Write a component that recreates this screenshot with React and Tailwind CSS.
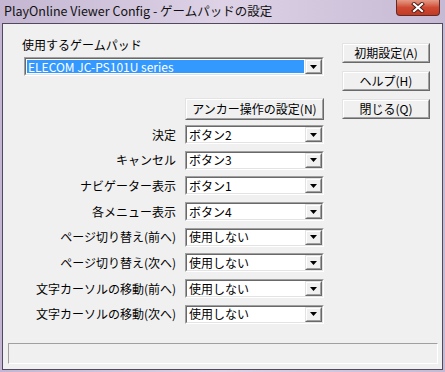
import React from 'react'

const rows = [
  ['決定', 'ボタン2'],
  ['キャンセル', 'ボタン3'],
  ['ナビゲーター表示', 'ボタン1'],
  ['各メニュー表示', 'ボタン4'],
  ['ページ切り替え(前へ)', '使用しない'],
  ['ページ切り替え(次へ)', '使用しない'],
  ['文字カーソルの移動(前へ)', '使用しない'],
  ['文字カーソルの移動(次へ)', '使用しない'],
]

function DropButton() {
  return (
    <div className="flex w-[17px] border border-t-[#e3e3e3] border-l-[#e3e3e3] border-b-[#696969] border-r-[#696969]">
      <div className="flex flex-1 items-center justify-center border border-t-white border-l-white border-b-[#a0a0a0] border-r-[#a0a0a0] bg-[#f0f0f0]">
        <svg width="7" height="4" viewBox="0 0 7 4">
          <polygon points="0,0 7,0 3.5,4" fill="#000" />
        </svg>
      </div>
    </div>
  )
}

function Combo({ value, selected, className }) {
  return (
    <div className={`flex border border-t-[#a0a0a0] border-l-[#a0a0a0] border-b-white border-r-white ${className}`}>
      <div className="flex flex-1 border border-t-[#696969] border-l-[#696969] border-b-[#e3e3e3] border-r-[#e3e3e3] bg-white">
        <div className="flex flex-1 items-stretch p-[1px]">
          {selected ? (
            <span className="flex flex-1 items-center bg-[#3399ff] pl-[1px] text-white">{value}</span>
          ) : (
            <span className="flex flex-1 items-center pl-[1px]">{value}</span>
          )}
        </div>
        <DropButton />
      </div>
    </div>
  )
}

function Button({ children, className }) {
  return (
    <div className={`flex border border-t-[#e3e3e3] border-l-[#e3e3e3] border-b-[#696969] border-r-[#696969] ${className}`}>
      <div className="flex flex-1 items-center justify-center border border-t-white border-l-white border-b-[#a0a0a0] border-r-[#a0a0a0] bg-[#f0f0f0]">
        {children}
      </div>
    </div>
  )
}

export default function App() {
  return (
    <div className="flex h-[372px] w-[445px] flex-col bg-gradient-to-r from-[#c4b6d2] via-[#ddd2e6] to-[#c6b9d4] font-['Noto_Sans_CJK_JP',sans-serif] text-black">
      {/* title bar */}
      <div className="flex h-[23px] items-start">
        <span className="pl-[4px] pt-[3px] text-[12.5px] leading-[16px] text-[#111]">
          PlayOnline Viewer Config - ゲームパッドの設定
        </span>
        <div className="ml-auto mr-[5px] flex h-[16px] w-[44px] items-center justify-center rounded-b-[4px] border border-t-0 border-[#5e2b26] bg-gradient-to-b from-[#e59a87] via-[#cf4a33] to-[#c23a24]">
          <svg width="14" height="11" viewBox="0 0 14 11">
            <path d="M3 2 L11 9 M11 2 L3 9" stroke="#4a1a14" strokeWidth="4" strokeLinecap="square" />
            <path d="M3 2 L11 9 M11 2 L3 9" stroke="#fff" strokeWidth="2.2" strokeLinecap="square" />
          </svg>
        </div>
      </div>

      {/* client area */}
      <div className="mx-[2px] mb-[2px] flex flex-1 flex-col border border-[#514a5e] bg-[#f0f0f0] text-[12px] leading-[14px]">
        <div className="flex">
          <div className="flex w-[321px] flex-col pl-[19px]">
            <span className="pt-[14px]">使用するゲームパッド</span>
            <Combo value="ELECOM JC-PS101U series" selected className="ml-[2px] mt-[5px] h-[19px] w-[300px]" />
            <Button className="mt-[22px] h-[22px] w-[139px] self-end">アンカー操作の設定(N)</Button>
            <div className="mt-[5px] flex flex-col gap-[6.7px]">
              {rows.map(([label, value]) => (
                <div key={label} className="flex items-center justify-end">
                  <span className="text-right">{label}</span>
                  <Combo value={value} className="ml-[9px] h-[19px] w-[139px]" />
                </div>
              ))}
            </div>
          </div>
          <div className="ml-[18px] flex flex-col gap-[8px] pt-[19px]">
            <Button className="h-[20px] w-[88px]">初期設定(A)</Button>
            <Button className="h-[20px] w-[88px]">ヘルプ(H)</Button>
            <Button className="h-[20px] w-[88px]">閉じる(Q)</Button>
          </div>
        </div>
        <div className="mb-[5px] ml-[5px] mt-auto h-[21px] w-[430px] border border-t-[#a0a0a0] border-l-[#a0a0a0] border-b-white border-r-white" />
      </div>
    </div>
  )
}
